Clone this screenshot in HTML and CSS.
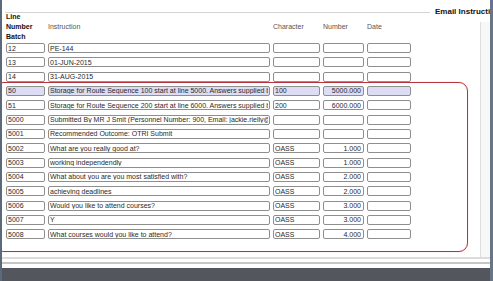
FILE: index.html
```html
<!DOCTYPE html>
<html lang="en">
<head>
    <meta charset="UTF-8">
    <title>Email Instructions</title>
    <link rel="stylesheet" href="styles.css">
</head>
<body>
    <div class="screen">
        <div class="legend">
            <span class="legend-line"></span>
            <span class="legend-text">Email Instructi</span>
        </div>
        <div class="body">
            <div class="content">
                <div class="grid head">
                    <div class="head-line">Line<br>Number<br>Batch</div>
                    <div class="head-col">Instruction</div>
                    <div class="head-col">Character</div>
                    <div class="head-col">Number</div>
                    <div class="head-col">Date</div>
                </div>
                <div class="rows">
                    <div class="grid">
                        <input class="field" value="12" readonly>
                        <input class="field" value="PE-144" readonly>
                        <input class="field" value="" readonly>
                        <input class="field num" value="" readonly>
                        <input class="field" value="" readonly>
                    </div>
                    <div class="grid">
                        <input class="field" value="13" readonly>
                        <input class="field" value="01-JUN-2015" readonly>
                        <input class="field" value="" readonly>
                        <input class="field num" value="" readonly>
                        <input class="field" value="" readonly>
                    </div>
                    <div class="grid">
                        <input class="field" value="14" readonly>
                        <input class="field" value="31-AUG-2015" readonly>
                        <input class="field" value="" readonly>
                        <input class="field num" value="" readonly>
                        <input class="field" value="" readonly>
                    </div>
                    <div class="grid selected">
                        <input class="field" value="50" readonly>
                        <input class="field" value="Storage for Route Sequence 100 start at line 5000. Answers supplied by the applicant" readonly>
                        <input class="field" value="100" readonly>
                        <input class="field num" value="5000.000" readonly>
                        <input class="field" value="" readonly>
                    </div>
                    <div class="grid">
                        <input class="field" value="51" readonly>
                        <input class="field" value="Storage for Route Sequence 200 start at line 6000. Answers supplied by the applicant" readonly>
                        <input class="field" value="200" readonly>
                        <input class="field num" value="6000.000" readonly>
                        <input class="field" value="" readonly>
                    </div>
                    <div class="grid">
                        <input class="field" value="5000" readonly>
                        <input class="field" value="Submitted By MR J Smit (Personnel Number: 900, Email: jackie.rielly@example.com)" readonly>
                        <input class="field" value="" readonly>
                        <input class="field num" value="" readonly>
                        <input class="field" value="" readonly>
                    </div>
                    <div class="grid">
                        <input class="field" value="5001" readonly>
                        <input class="field" value="Recommended Outcome: OTRI Submit" readonly>
                        <input class="field" value="" readonly>
                        <input class="field num" value="" readonly>
                        <input class="field" value="" readonly>
                    </div>
                    <div class="grid">
                        <input class="field" value="5002" readonly>
                        <input class="field" value="What are you really good at?" readonly>
                        <input class="field" value="OASS" readonly>
                        <input class="field num" value="1.000" readonly>
                        <input class="field" value="" readonly>
                    </div>
                    <div class="grid">
                        <input class="field" value="5003" readonly>
                        <input class="field" value="working independendly" readonly>
                        <input class="field" value="OASS" readonly>
                        <input class="field num" value="1.000" readonly>
                        <input class="field" value="" readonly>
                    </div>
                    <div class="grid">
                        <input class="field" value="5004" readonly>
                        <input class="field" value="What about you are you most satisfied with?" readonly>
                        <input class="field" value="OASS" readonly>
                        <input class="field num" value="2.000" readonly>
                        <input class="field" value="" readonly>
                    </div>
                    <div class="grid">
                        <input class="field" value="5005" readonly>
                        <input class="field" value="achieving deadlines" readonly>
                        <input class="field" value="OASS" readonly>
                        <input class="field num" value="2.000" readonly>
                        <input class="field" value="" readonly>
                    </div>
                    <div class="grid">
                        <input class="field" value="5006" readonly>
                        <input class="field" value="Would you like to attend courses?" readonly>
                        <input class="field" value="OASS" readonly>
                        <input class="field num" value="3.000" readonly>
                        <input class="field" value="" readonly>
                    </div>
                    <div class="grid">
                        <input class="field" value="5007" readonly>
                        <input class="field" value="Y" readonly>
                        <input class="field" value="OASS" readonly>
                        <input class="field num" value="3.000" readonly>
                        <input class="field" value="" readonly>
                    </div>
                    <div class="grid">
                        <input class="field" value="5008" readonly>
                        <input class="field" value="What courses would you like to attend?" readonly>
                        <input class="field" value="OASS" readonly>
                        <input class="field num" value="4.000" readonly>
                        <input class="field" value="" readonly>
                    </div>
                </div>
            </div>
            <div class="gutter"></div>
        </div>
        <div class="rule-a"></div>
        <div class="rule-b"></div>
        <div class="taskbar"></div>
        <!-- red marker drawn over the screenshot -->
        <div class="marker"></div>
    </div>
</body>
</html>
```

FILE: styles.css
```css
body {
    margin: 0;
    font-family: "Liberation Sans", Arial, sans-serif;
    background: #ffffff;
}

.screen {
    position: relative;
    width: 493px;
    height: 281px;
    box-sizing: border-box;
    border-left: 2px solid #5a6a7a;
    border-right: 3px solid #667688;
    display: flex;
    flex-direction: column;
    overflow: hidden;
    background: #ffffff;
}

.legend {
    display: flex;
    align-items: center;
    height: 8px;
    margin: 8px 0 -4px;
    padding-left: 3px;
    white-space: nowrap;
}

.legend-line {
    flex: none;
    width: 425px;
    border-top: 1px solid #d4d4d4;
    margin-right: 5px;
}

.legend-text {
    font-size: 8px;
    line-height: 8px;
    font-weight: bold;
    color: #111;
}

.body {
    flex: 1;
    display: flex;
}

.content {
    width: 478px;
    padding-left: 4px;
    box-sizing: border-box;
}

.gutter {
    flex: 1;
    border-left: 1px solid #dedede;
    background: #f7f7f7;
    margin-top: 10px;
}

.grid {
    display: grid;
    grid-template-columns: 39px 222px 47px 41px 44px;
    column-gap: 3px;
    height: 10px;
}

.head {
    height: 30px;
    margin-bottom: 1px;
}

.head-line {
    font-size: 7px;
    line-height: 10px;
    font-weight: bold;
    color: #111;
}

.head-col {
    align-self: center;
    font-size: 7px;
    line-height: 10px;
    color: #555;
}

.rows {
    display: flex;
    flex-direction: column;
    gap: 4.33px;
}

.field {
    width: 100%;
    height: 10px;
    box-sizing: border-box;
    margin: 0;
    padding: 0 1px;
    border: 1px solid #8e8e8e;
    border-radius: 2px;
    background: #ffffff;
    font-family: "Liberation Sans", Arial, sans-serif;
    font-size: 7px;
    line-height: 8px;
    color: #2a2a2a;
    outline: none;
}

.num {
    text-align: right;
    padding-right: 2px;
}

.selected .field {
    background: #dcdcf5;
}

.rule-a {
    height: 2px;
    background: #dcdcdc;
    margin-bottom: 3px;
}

.rule-b {
    height: 2px;
    background: #c6c6c6;
    margin-bottom: 4px;
}

.taskbar {
    flex: none;
    height: 13px;
    background: #53575d;
}

.marker {
    position: absolute;
    left: -2px;
    top: 82px;
    width: 468px;
    height: 170px;
    box-sizing: border-box;
    border: 1.5px solid #b8323e;
    border-radius: 3px 9px 9px 3px;
    box-shadow: 0 0 1px #e69aa0;
}
```
